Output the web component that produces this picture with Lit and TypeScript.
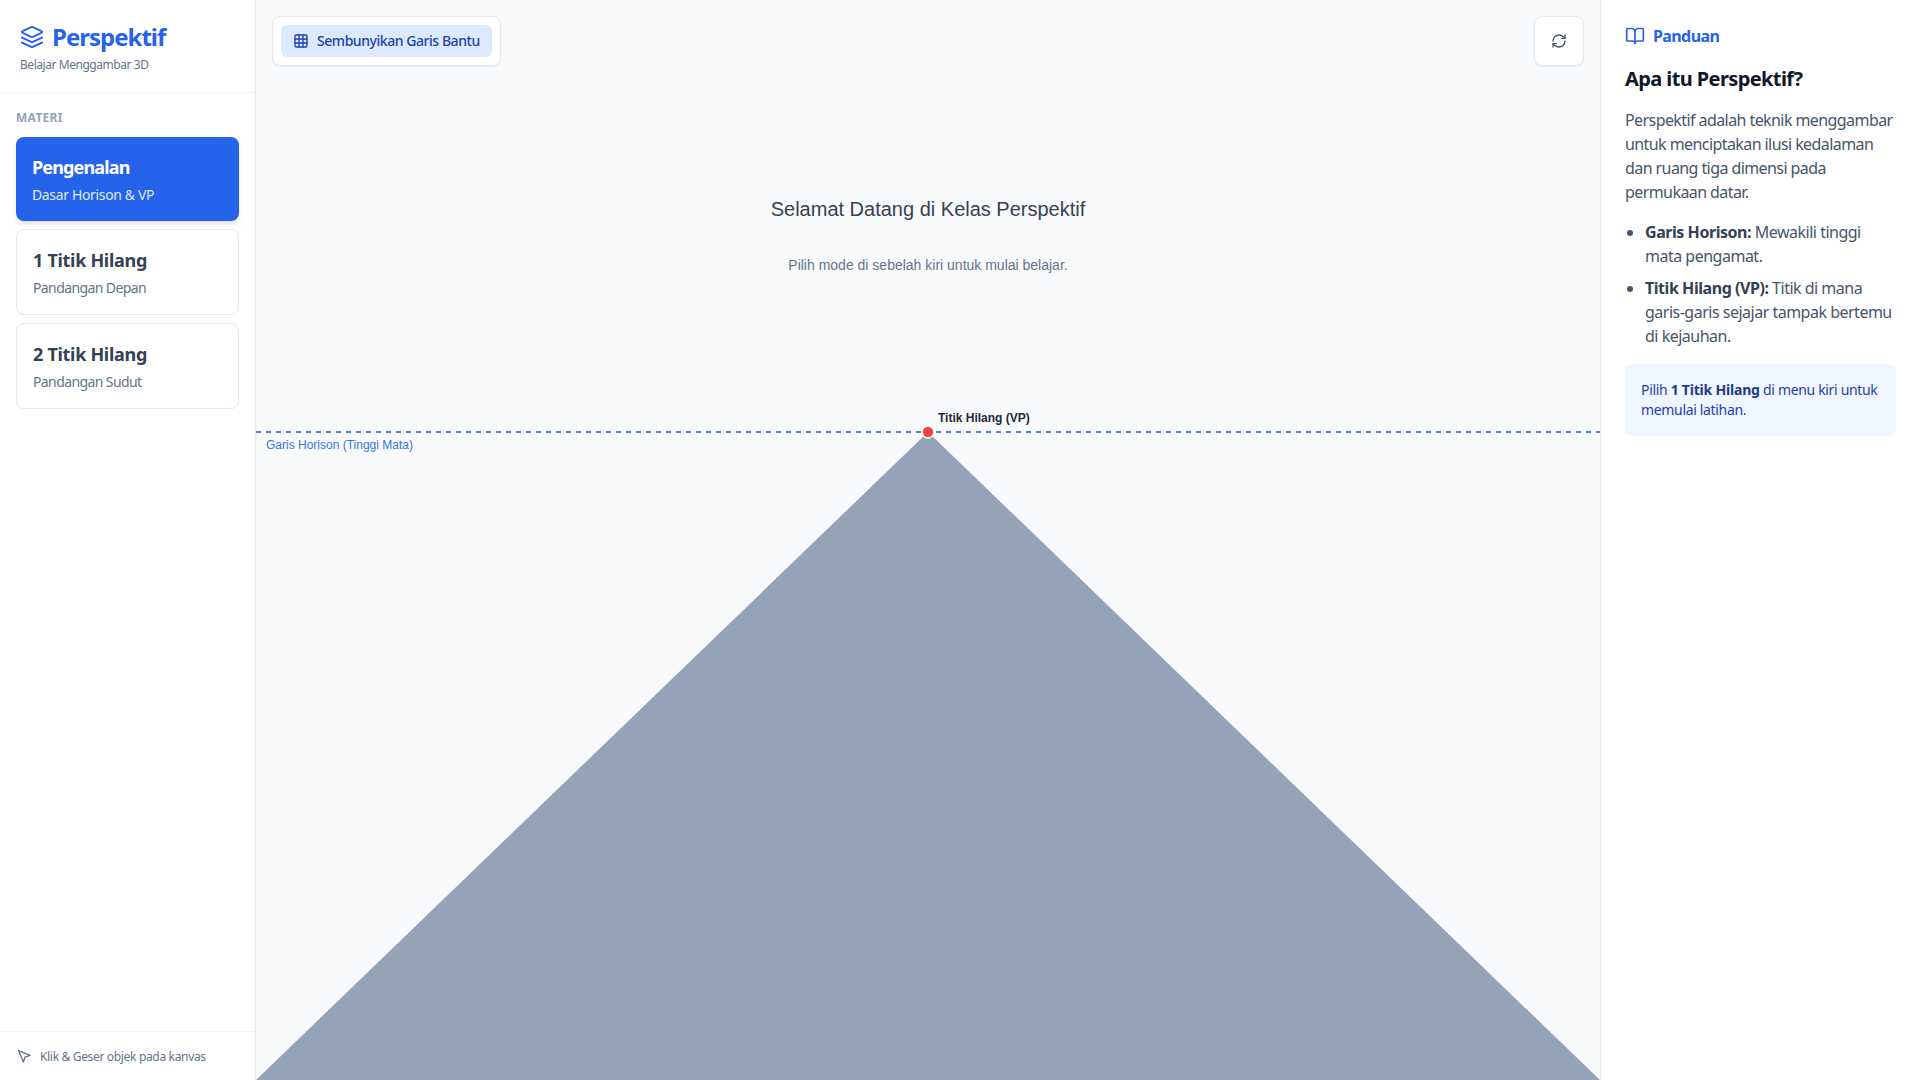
import { LitElement, html, css, svg } from "lit";
import { customElement, state } from "lit/decorators.js";

const lessons = [
  { title: "Pengenalan", sub: "Dasar Horison & VP" },
  { title: "1 Titik Hilang", sub: "Pandangan Depan" },
  { title: "2 Titik Hilang", sub: "Pandangan Sudut" },
];

const icon = (size: number, paths: unknown) => html`
  <svg
    width=${size}
    height=${size}
    viewBox="0 0 24 24"
    fill="none"
    stroke="currentColor"
    stroke-width="2"
    stroke-linecap="round"
    stroke-linejoin="round"
  >
    ${paths}
  </svg>
`;

const layersIcon = svg`
  <path d="m12.83 2.18a2 2 0 0 0-1.66 0L2.6 6.08a1 1 0 0 0 0 1.83l8.58 3.91a2 2 0 0 0 1.66 0l8.58-3.9a1 1 0 0 0 0-1.83Z" />
  <path d="m22 17.65-9.17 4.16a2 2 0 0 1-1.66 0L2 17.65" />
  <path d="m22 12.65-9.17 4.16a2 2 0 0 1-1.66 0L2 12.65" />
`;
const gridIcon = svg`
  <rect x="3" y="3" width="18" height="18" rx="2" />
  <path d="M3 9h18M3 15h18M9 3v18M15 3v18" />
`;
const refreshIcon = svg`
  <path d="M3 12a9 9 0 0 1 9-9 9.75 9.75 0 0 1 6.74 2.74L21 8" />
  <path d="M21 3v5h-5" />
  <path d="M21 12a9 9 0 0 1-9 9 9.75 9.75 0 0 1-6.74-2.74L3 16" />
  <path d="M8 16H3v5" />
`;
const bookIcon = svg`
  <path d="M12 7v14" />
  <path d="M3 18a1 1 0 0 1-1-1V4a1 1 0 0 1 1-1h5a4 4 0 0 1 4 4 4 4 0 0 1 4-4h5a1 1 0 0 1 1 1v13a1 1 0 0 1-1 1h-6a3 3 0 0 0-3 3 3 3 0 0 0-3-3z" />
`;
const pointerIcon = svg`<path d="m4 4 7.07 17 2.51-7.39L21 11.07z" />`;

@customElement("app-root")
export class AppRoot extends LitElement {
  @state() active = 0;

  static styles = css`
    :host {
      display: block;
      height: 1080px;
      font-family: "Noto Sans", sans-serif;
      color: #334155;
    }

    * {
      box-sizing: border-box;
    }

    .app {
      display: flex;
      height: 100%;
      overflow: hidden;
      background: #f8fafc;
    }

    .sidebar {
      width: 256px;
      flex: none;
      display: flex;
      flex-direction: column;
      background: #fff;
      border-right: 1px solid #e2e8f0;
    }

    .brand {
      height: 93px;
      padding: 21px 20px 0;
      border-bottom: 1px solid #f1f5f9;
    }

    .brand-title {
      display: flex;
      align-items: center;
      gap: 8px;
      font-size: 24px;
      line-height: 32px;
      font-weight: 700;
      letter-spacing: -1px;
      color: #2563eb;
    }

    .brand-sub {
      margin-top: 4px;
      font-size: 12px;
      line-height: 16px;
      letter-spacing: -0.45px;
      color: #64748b;
    }

    .menu {
      flex: 1;
      padding: 17px 16px 16px;
      display: flex;
      flex-direction: column;
      gap: 8px;
    }

    .menu-label {
      font-size: 12px;
      line-height: 16px;
      font-weight: 700;
      letter-spacing: 0.3px;
      color: #94a3b8;
      margin-bottom: 3px;
    }

    .lesson {
      padding: 16px;
      border: 1px solid #e2e8f0;
      border-radius: 8px;
      background: #fff;
      color: #334155;
    }

    .lesson.active {
      border: 0;
      background: #2563eb;
      color: #fff;
      box-shadow: 0 4px 6px -1px rgba(0, 0, 0, 0.1), 0 2px 4px -2px rgba(0, 0, 0, 0.1);
    }

    .lesson-title {
      font-size: 18px;
      line-height: 28px;
      font-weight: 700;
      letter-spacing: -0.3px;
    }

    .lesson.active .lesson-title {
      letter-spacing: -0.85px;
    }

    .lesson-sub {
      margin-top: 4px;
      font-size: 14px;
      line-height: 20px;
      letter-spacing: -0.6px;
      color: #64748b;
    }

    .lesson.active .lesson-sub {
      letter-spacing: -0.35px;
      color: #dbeafe;
    }

    .hint {
      height: 49px;
      padding: 0 16px;
      display: flex;
      align-items: center;
      gap: 8px;
      border-top: 1px solid #f1f5f9;
      font-size: 12px;
      letter-spacing: -0.33px;
      color: #64748b;
    }

    .stage {
      flex: 1;
      position: relative;
      overflow: hidden;
    }

    .stage svg.scene {
      display: block;
    }

    .scene text {
      font-family: "Liberation Sans", Arial, sans-serif;
    }

    .panel {
      position: absolute;
      top: 16px;
      background: #fff;
      border: 1px solid #e2e8f0;
      border-radius: 8px;
      box-shadow: 0 1px 2px rgba(0, 0, 0, 0.05);
    }

    .tools {
      left: 16px;
      padding: 8px;
    }

    .toggle {
      display: flex;
      align-items: center;
      gap: 8px;
      height: 32px;
      padding: 0 12px 1px;
      border-radius: 6px;
      background: #dbeafe;
      color: #1e40af;
      font-size: 14px;
      font-weight: 500;
      letter-spacing: -0.45px;
    }

    .reset {
      right: 16px;
      width: 50px;
      height: 50px;
      display: flex;
      align-items: center;
      justify-content: center;
      color: #475569;
    }

    .guide {
      width: 320px;
      flex: none;
      padding: 24px;
      background: #fff;
      border-left: 1px solid #e2e8f0;
      font-size: 16px;
      line-height: 24px;
      letter-spacing: -0.5px;
      color: #475569;
    }

    .guide-head {
      display: flex;
      align-items: center;
      gap: 8px;
      font-weight: 700;
      letter-spacing: -0.6px;
      color: #2563eb;
    }

    .guide h2 {
      margin: 17px 0 15px;
      font-size: 20px;
      line-height: 28px;
      font-weight: 700;
      letter-spacing: -0.6px;
      color: #0f172a;
    }

    .guide p {
      margin: 0 0 16px;
      letter-spacing: -0.58px;
    }

    .guide ul {
      margin: 0 0 16px;
      padding: 0 0 0 20px;
    }

    .guide li {
      margin-bottom: 8px;
    }

    .guide li b {
      letter-spacing: -0.45px;
      color: #334155;
    }

    .note {
      padding: 16px;
      border-radius: 8px;
      background: #eff6ff;
      font-size: 14px;
      line-height: 20px;
      letter-spacing: -0.33px;
      color: #1e40af;
    }

    .note b {
      letter-spacing: -0.2px;
      color: #1e3a8a;
    }
  `;

  render() {
    return html`
      <div class="app">
        <aside class="sidebar">
          <div class="brand">
            <div class="brand-title">${icon(24, layersIcon)} Perspektif</div>
            <div class="brand-sub">Belajar Menggambar 3D</div>
          </div>
          <div class="menu">
            <div class="menu-label">MATERI</div>
            ${lessons.map(
              (l, i) => html`
                <div class="lesson ${i === this.active ? "active" : ""}">
                  <div class="lesson-title">${l.title}</div>
                  <div class="lesson-sub">${l.sub}</div>
                </div>
              `
            )}
          </div>
          <div class="hint">${icon(16, pointerIcon)} Klik &amp; Geser objek pada kanvas</div>
        </aside>

        <main class="stage">
          ${this.renderScene()}
          <div class="panel tools">
            <div class="toggle">${icon(16, gridIcon)} Sembunyikan Garis Bantu</div>
          </div>
          <div class="panel reset">${icon(16, refreshIcon)}</div>
        </main>

        <aside class="guide">
          <div class="guide-head">${icon(20, bookIcon)} Panduan</div>
          <h2>Apa itu Perspektif?</h2>
          <p>Perspektif adalah teknik menggambar untuk menciptakan ilusi kedalaman dan ruang tiga dimensi pada permukaan datar.</p>
          <ul>
            <li><b>Garis Horison:</b> Mewakili tinggi mata pengamat.</li>
            <li><b>Titik Hilang (VP):</b> Titik di mana garis-garis sejajar tampak bertemu di kejauhan.</li>
          </ul>
          <div class="note">Pilih <b>1 Titik Hilang</b> di menu kiri untuk memulai latihan.</div>
        </aside>
      </div>
    `;
  }

  renderScene() {
    // scene coordinates are the stage's own pixels; vanishing point at 672,432
    return html`
      <svg class="scene" width="1344" height="1080" viewBox="0 0 1344 1080">
        <polygon points="672,432 0,1080 1344,1080" fill="#94a3b8" />
        <text x="672" y="215.5" text-anchor="middle" font-size="20" fill="#374151">Selamat Datang di Kelas Perspektif</text>
        <text x="672" y="270" text-anchor="middle" font-size="14" fill="#64748b">Pilih mode di sebelah kiri untuk mulai belajar.</text>
        <line x1="0" y1="432" x2="1344" y2="432" stroke="#4f80c8" stroke-width="2" stroke-dasharray="5 5" />
        <text x="10" y="449" font-size="12" fill="#3577e0">Garis Horison (Tinggi Mata)</text>
        <circle cx="672" cy="432" r="6" fill="#ef4444" stroke="#fff" stroke-width="1.5" />
        <text x="682" y="422" font-size="12" font-weight="700" fill="#1e293b">Titik Hilang (VP)</text>
      </svg>
    `;
  }
}
